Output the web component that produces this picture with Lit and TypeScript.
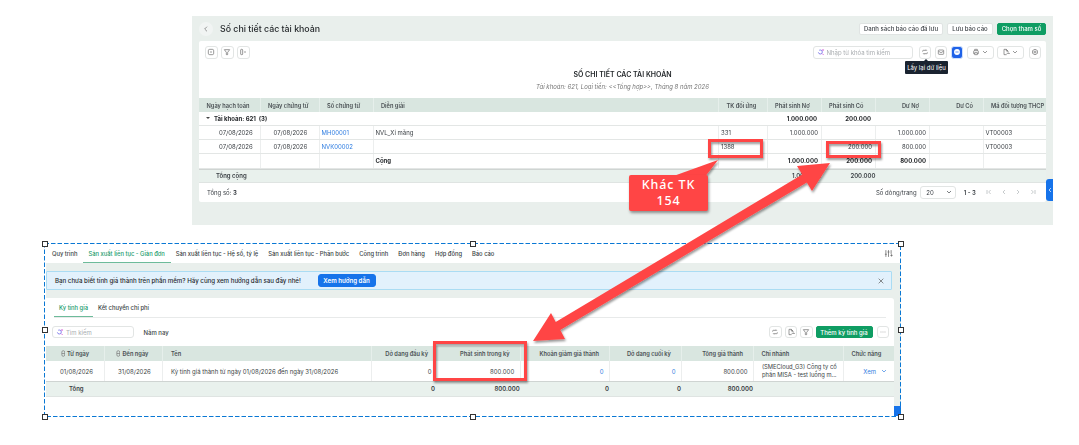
import {LitElement, html, css, svg} from 'lit';
import {customElement} from 'lit/decorators.js';

const line = (d: unknown) => html`<svg class="ico" viewBox="0 0 12 12" fill="none" stroke="currentColor" stroke-width="1">${d}</svg>`;

const icons = {
  collapse: line(svg`<rect x="2" y="2" width="8" height="8" rx="2"/><path d="M4.5 6h3"/>`),
  filter: line(svg`<path d="M2 2.5h8L7 6.5V10H5V6.5z"/>`),
  columns: line(svg`<rect x="2.5" y="2" width="3" height="8" rx="1"/><path d="M7.5 6h3"/>`),
  refresh: line(svg`<path d="M2.5 5.5V4.5a1 1 0 0 1 1-1h5l-1-1M9.5 6.5v1a1 1 0 0 1-1 1h-5l1 1"/>`),
  mail: line(svg`<rect x="2" y="3" width="8" height="6.5" rx="1"/><path d="M2.5 5l3.5 2 3.5-2"/>`),
  printer: line(svg`<path d="M4 4V2h4v2M4 8.5H2.5V5a1 1 0 0 1 1-1h5a1 1 0 0 1 1 1v3.5H8M4 7h4v3H4z"/>`),
  exportFile: line(svg`<path d="M7 10H3V2h3.5L9 4.5V6M6.5 2v2.5H9M7 8h4M10 7l1 1-1 1"/>`),
  gear: line(svg`<circle cx="6" cy="6" r="1.5"/><path d="M6 1.8l3.6 2.1v4.2L6 10.2 2.4 8.1V3.9z"/>`),
  chevron: line(svg`<path d="M3 4.5l3 3 3-3"/>`),
  back: line(svg`<path d="M7.5 2.5L4 6l3.5 3.5"/>`),
  close: line(svg`<path d="M2.5 2.5l7 7M9.5 2.5l-7 7"/>`),
  tune: line(svg`<path d="M2.5 1.5v9M6 1.5v9M9.5 1.5v5M1.2 7h2.6M4.7 4h2.6M8.5 8.5h3M10 7v3"/>`),
  more: line(svg`<path d="M2.5 6h1M5.5 6h1M8.5 6h1"/>`),
  first: line(svg`<path d="M3 3v6M8.5 3L5.5 6l3 3"/>`),
  prev: line(svg`<path d="M7.5 3l-3 3 3 3"/>`),
  next: line(svg`<path d="M4.5 3l3 3-3 3"/>`),
  last: line(svg`<path d="M9 3v6M3.5 3l3 3-3 3"/>`),
  sort: html`<svg class="ico sort" viewBox="0 0 8 12" fill="none" stroke="currentColor" stroke-width="1.2"><rect x="1.5" y="1" width="5" height="10" rx="2.5"/><path d="M1.5 6h5"/></svg>`,
  spark: html`<svg class="ico" viewBox="0 0 12 12" fill="none" stroke-width="1.2"><circle cx="5" cy="6" r="3" stroke="#6d6ae8" stroke-dasharray="8 3"/><path d="M8 8.5l2 2" stroke="#d24fd0"/><path d="M9 1.5v3M7.6 3h3" stroke="#d24fd0" stroke-width=".8"/></svg>`,
  messenger: html`<svg class="ico" viewBox="0 0 12 12"><circle cx="6" cy="6" r="4.4" fill="#fff"/><path d="M3.6 6h4.8" stroke="#1f62e8" stroke-width="1"/></svg>`,
};

const topHead = ['Ngày hạch toán', 'Ngày chứng từ', 'Số chứng từ', 'Diễn giải', 'TK đối ứng', 'Phát sinh Nợ', 'Phát sinh Có', 'Dư Nợ', 'Dư Có', 'Mã đối tượng THCP'];
const topRows = [
  ['07/08/2026', '07/08/2026', 'MH00001', 'NVL_Xi măng', '331', '1.000.000', '', '1.000.000', '', 'VT00003'],
  ['07/08/2026', '07/08/2026', 'NVK00002', '', '1388', '', '200.000', '800.000', '', 'VT00003'],
  ['', '', '', 'Cộng', '', '1.000.000', '200.000', '800.000', '', ''],
];

const subTabs = ['Quy trình', 'Sản xuất liên tục - Giản đơn', 'Sản xuất liên tục - Hệ số, tỷ lệ', 'Sản xuất liên tục - Phân bước', 'Công trình', 'Đơn hàng', 'Hợp đồng', 'Báo cáo'];
const botHead = ['Từ ngày', 'Đến ngày', 'Tên', 'Dở dang đầu kỳ', 'Phát sinh trong kỳ', 'Khoản giảm giá thành', 'Dở dang cuối kỳ', 'Tổng giá thành', 'Chi nhánh', 'Chức năng'];
const handles = ['tl', 'tc', 'tr-h', 'ml', 'mr', 'bl', 'bc', 'br'];

@customElement('app-root')
export class AppRoot extends LitElement {
  static styles = css`
    :host {
      display: block;
      position: relative;
      width: 1079px;
      height: 445px;
      overflow: hidden;
      background: #fff;
      font-family: Inter, 'Noto Sans', sans-serif;
      font-size: 6px;
      color: #3a3f44;
    }
    .ico { width: 8px; height: 8px; display: block; flex: none; }
    .ico.sort { width: 4.5px; height: 7px; color: #777; }

    .report {
      margin: 16px 0 0 192px;
      width: 861px;
      height: 209px;
      background: #e9efec;
      padding: 0 7px;
      box-sizing: border-box;
      display: flex;
      flex-direction: column;
      position: relative;
      filter: blur(0.3px);
    }
    .report-head {
      height: 25px;
      display: flex;
      align-items: center;
    }
    .back {
      width: 14px;
      height: 14px;
      border-radius: 50%;
      background: #f1f4f3;
      display: flex;
      align-items: center;
      justify-content: center;
      color: #666;
      margin-right: 7px;
    }
    .title { font-size: 8.8px; font-weight: 500; color: #1f2326; }
    .head-actions { margin-left: auto; display: flex; gap: 4px; }
    .btn {
      height: 12px;
      border-radius: 2px;
      background: #fff;
      border: 1px solid #e0e4e3;
      box-sizing: border-box;
      display: flex;
      align-items: center;
      justify-content: center;
      font-weight: 500;
      white-space: nowrap;
    }
    .btn.saved { width: 84px; }
    .btn.save { width: 46px; }
    .btn.params { width: 49px; }
    .btn.add { width: 57px; }
    .btn.green { background: #0f9d63; border-color: #0f9d63; color: #fff; }
    .btn.blue { width: 58px; height: 13px; background: #1673ea; border-color: #1673ea; color: #fff; border-radius: 3px; font-weight: 600; }

    .report-card {
      background: #fff;
      border-radius: 2px;
      height: 161px;
      display: flex;
      flex-direction: column;
    }
    .tools {
      height: 18px;
      box-sizing: border-box;
      padding: 5px 5px 0 6px;
      display: flex;
      gap: 3.5px;
      align-items: flex-start;
    }
    .tool {
      width: 12.5px;
      height: 12.5px;
      border: 1px solid #e2e5e4;
      border-radius: 3px;
      box-sizing: border-box;
      display: flex;
      align-items: center;
      justify-content: center;
      color: #666;
      background: #fff;
    }
    .tool.wide { width: 27px; gap: 1px; }
    .tool.blue { background: #1f62e8; border-color: #cfe0fb; }
    .tool.last { margin-left: 1px; }
    .search {
      width: 100px;
      height: 12.5px;
      border: 1px solid #e2e5e4;
      border-radius: 3px;
      box-sizing: border-box;
      display: flex;
      align-items: center;
      gap: 2px;
      padding-left: 3px;
      color: #a9adb0;
    }
    .report-search { margin: 0 2.5px 0 auto; }
    .push { margin-left: auto; }
    .report-title {
      text-align: center;
      font-size: 7px;
      font-weight: 600;
      color: #1f2326;
      margin-top: 11px;
      line-height: 9px;
    }
    .report-sub {
      text-align: center;
      font-style: italic;
      color: #777;
      margin-top: 4px;
      line-height: 8px;
      margin-bottom: 7px;
    }

    .row { display: grid; }
    .report-card .row { grid-template-columns: 61.5px 59px 54px 345.5px 48.5px 54px 54px 54px 54px 62.5px; }
    .cell {
      display: flex;
      align-items: center;
      white-space: nowrap;
      box-sizing: border-box;
      min-width: 0;
    }
    .thead { background: #d9e6e0; height: 14px; font-weight: 600; font-size: 5.7px; color: #4a5054; }
    .thead .cell { border-right: 1px solid #e6efeb; padding-left: 7.5px; }
    .thead .cell:last-child { border-right: 0; }
    .thead .cell.end { justify-content: flex-end; padding: 0 9.5px 0 0; }
    .tr { height: 14.3px; border-bottom: 1px solid #e3e6e5; box-sizing: border-box; }
    .tr .cell { border-right: 1px solid #eceeee; padding: 0 2px; }
    .tr .cell:last-child { border-right: 0; }
    .tr .cell.end { justify-content: flex-end; padding-right: 2.5px; }
    .tr .cell.d1 { padding-left: 20px; }
    .tr .cell.d2 { padding-left: 13px; }
    .link { color: #2f7de1; }
    .bold { font-weight: 700; color: #26292c; }
    .group { height: 13.7px; border-bottom: 1px solid #e3e6e5; box-sizing: border-box; font-weight: 700; color: #26292c; }
    .group .cell.end { justify-content: flex-end; padding-right: 4.5px; }
    .group .label, .total .label { grid-column: span 5; }
    .group .label { padding-left: 7px; gap: 4px; }
    .caret { width: 0; height: 0; border: 2px solid transparent; border-top: 2.5px solid #444; border-bottom: 0; }
    .total { height: 14px; background: #e9f1ed; border-top: 1px solid #cfd4d2; border-bottom: 1px solid #dfe4e2; box-sizing: border-box; font-weight: 600; }
    .total .label { padding-left: 17px; }
    .total .cell.end { justify-content: flex-end; }
    .foot {
      flex: 1;
      display: flex;
      align-items: center;
      padding: 0 9px 0 8px;
    }
    .pager { margin-left: auto; display: flex; align-items: center; }
    .select {
      width: 35.5px;
      height: 12.5px;
      margin: 0 8px 0 3.7px;
      border: 1px solid #e2e5e4;
      border-radius: 3px;
      box-sizing: border-box;
      display: flex;
      align-items: center;
      justify-content: space-between;
      padding: 0 2px 0 5px;
    }
    .page-count { font-weight: 600; margin-right: 9px; }
    .nav { display: flex; gap: 6.7px; color: #aab0b3; }
    .side-tab {
      position: absolute;
      right: 0;
      top: 163px;
      width: 7px;
      height: 22px;
      background: #1673ea;
      border-radius: 3px 0 0 3px;
      color: #fff;
      display: flex;
      align-items: center;
      justify-content: center;
    }
    .tooltip {
      position: absolute;
      left: 905px;
      top: 61px;
      width: 43px;
      height: 13px;
      background: #1a2330;
      color: #fff;
      border-radius: 1px;
      display: flex;
      align-items: center;
      justify-content: center;
    }
    .tooltip::before {
      content: '';
      position: absolute;
      left: 19px;
      top: -2px;
      border: 2px solid transparent;
      border-top: 0;
      border-bottom-color: #1a2330;
    }

    .frame {
      position: relative;
      margin: 18px 0 0 44px;
      width: 857px;
      height: 174px;
      padding: 1px 0 1px 1.5px;
      box-sizing: border-box;
      display: flex;
      flex-direction: column;
    }
    .dash { position: absolute; left: 0; top: 0; width: 857px; height: 174px; }
    .handle {
      position: absolute;
      width: 4px;
      height: 4px;
      background: #fff;
      border: 1px solid #333;
    }
    .tl { left: -2.5px; top: -2.5px; } .tc { left: 426px; top: -2.5px; } .tr-h { right: -2.5px; top: -2.5px; }
    .ml { left: -2.5px; top: 84px; } .mr { right: -2.5px; top: 84px; }
    .bl { left: -2.5px; bottom: -2.5px; } .bc { left: 426px; bottom: -2.5px; } .br { right: -2.5px; bottom: -2.5px; }

    .tabs {
      height: 19px;
      flex: none;
      display: flex;
      align-items: center;
      padding: 0 8px 0 1.5px;
      font-weight: 500;
      font-size: 5.8px;
    }
    .tab {
      height: 19px;
      padding: 0 5px;
      display: flex;
      align-items: center;
      box-sizing: border-box;
      white-space: nowrap;
    }
    .tab.on { color: #1b9b6b; border-bottom: 1px solid #6dbb9a; padding: 0 6px; }
    .tab-tune { margin-left: auto; color: #666; }
    .tab-tune .ico { width: 9px; height: 9px; }
    .work {
      flex: 1;
      background: #e9efec;
      padding: 8px 7px 0 0.5px;
      display: flex;
      flex-direction: column;
      position: relative;
    }
    .banner {
      height: 19px;
      flex: none;
      margin-right: 2px;
      background: #e2f1fc;
      border: 1px solid #aadcf3;
      border-radius: 1px;
      box-sizing: border-box;
      display: flex;
      align-items: center;
      padding: 0 6px 0 8px;
      font-weight: 500;
      font-size: 6.15px;
      color: #26292c;
    }
    .banner-text { width: 262.5px; white-space: nowrap; }
    .banner-close { margin-left: auto; color: #555; }
    .card {
      flex: 1;
      margin-top: 8px;
      background: #fff;
      border-radius: 0 3px 0 0;
      display: flex;
      flex-direction: column;
    }
    .card-tabs {
      height: 19px;
      flex: none;
      margin: 0 8px 0 8px;
      border-bottom: 1px solid #e8eaea;
      display: flex;
      align-items: center;
      font-weight: 500;
      font-size: 5.8px;
    }
    .card-tab { height: 19px; padding: 0 5px; display: flex; align-items: center; box-sizing: border-box; }
    .card-tab.on { color: #1b9b6b; border-bottom: 1px solid #6dbb9a; }
    .card-tools {
      height: 28px;
      flex: none;
      display: flex;
      align-items: center;
      padding: 0 5px 0 6px;
      gap: 3px;
    }
    .small-search { width: 81.5px; margin-right: 7px; }
    .year { font-weight: 500; }
    .more { margin-left: 1px; }
    .card .row { grid-template-columns: 58.7px 58.8px 209px 62.5px 85.7px 89.3px 72px 72px 90px 49px; }
    .card .thead { height: 15px; }
    .card .thead .cell { padding-left: 7.5px; gap: 2px; }
    .card .thead .cell.end { padding: 0 6px 0 0; }
    .card .thead .cell.wide-end { padding-right: 10px; }
    .card .thead .cell.d1 { padding-left: 14.5px; }
    .card .thead .cell.d2 { padding-left: 11.3px; }
    .card .tr { height: 21px; border-bottom: 1px solid #cfd4d2; }
    .card .tr .cell { padding: 0 7.5px; }
    .card .tr .cell.end { justify-content: flex-end; padding-right: 5.5px; }
    .card .tr .cell.open { justify-content: flex-end; padding-right: 2.5px; }
    .card .tr .cell.d1 { padding-left: 14px; }
    .card .tr .cell.d2 { padding-left: 13.3px; }
    .card .tr .cell.branch { white-space: normal; line-height: 8px; font-size: 5.8px; padding: 0 0 0 8px; }
    .card .tr .cell.view { color: #2f7de1; justify-content: flex-end; gap: 4px; padding-right: 5px; }
    .card .total { height: 14.5px; border-top: 0; font-weight: 600; }
    .card .total .label { grid-column: span 3; padding-left: 23px; }
    .card .total .cell.end { padding-right: 1px; }
    .card .total .cell.flush { padding-right: 0; }
    .thumb { position: absolute; right: 0; bottom: 0; width: 7px; height: 10px; background: #1673ea; }

    .marks { position: absolute; left: 0; top: 0; width: 1079px; height: 445px; pointer-events: none; }
    .callout {
      position: absolute;
      left: 629px;
      top: 175px;
      width: 79px;
      height: 36px;
      background: #ff4545;
      border-radius: 2px;
      box-shadow: 1px 2px 3px rgba(0, 0, 0, 0.4);
      color: #fff;
      font-family: 'Noto Sans', sans-serif;
      font-size: 12.5px;
      font-weight: 500;
      letter-spacing: 0.9px;
      line-height: 16px;
      text-align: center;
      display: flex;
      align-items: center;
      justify-content: center;
    }
  `;

  renderReport() {
    return html`
      <section class="report">
        <header class="report-head">
          <div class="back">${icons.back}</div>
          <div class="title">Số chi tiết các tài khoản</div>
          <div class="head-actions">
            <div class="btn saved">Danh sách báo cáo đã lưu</div>
            <div class="btn save">Lưu báo cáo</div>
            <div class="btn params green">Chọn tham số</div>
          </div>
        </header>
        <div class="report-card">
          <div class="tools">
            <div class="tool">${icons.collapse}</div>
            <div class="tool">${icons.filter}</div>
            <div class="tool">${icons.columns}</div>
            <div class="search report-search">${icons.spark}<span>Nhập từ khóa tìm kiếm</span></div>
            <div class="tool">${icons.refresh}</div>
            <div class="tool">${icons.mail}</div>
            <div class="tool blue">${icons.messenger}</div>
            <div class="tool wide">${icons.printer}${icons.chevron}</div>
            <div class="tool wide">${icons.exportFile}${icons.chevron}</div>
            <div class="tool last">${icons.gear}</div>
          </div>
          <div class="report-title">SỐ CHI TIẾT CÁC TÀI KHOẢN</div>
          <div class="report-sub">Tài khoản: 621, Loại tiền: &lt;&lt;Tổng hợp&gt;&gt;, Tháng 8 năm 2026</div>
          <div class="row thead">
            ${topHead.map((h, i) => html`<div class="cell ${i === 7 || i === 8 ? 'end' : ''}">${h}</div>`)}
          </div>
          <div class="row group">
            <div class="cell label"><span class="caret"></span>Tài khoản: 621&nbsp;&nbsp;(3)</div>
            <div class="cell end">1.000.000</div>
            <div class="cell end">200.000</div>
          </div>
          ${topRows.map((r, ri) => html`
            <div class="row tr ${ri === 2 ? 'bold' : ''}">
              ${r.map((v, i) => {
                const cls = [i === 0 ? 'd1' : '', i === 1 ? 'd2' : '', i === 2 ? 'link' : '', i >= 5 && i <= 8 ? 'end' : ''].join(' ');
                return html`<div class="cell ${cls}">${v}</div>`;
              })}
            </div>`)}
          <div class="row total">
            <div class="cell label">Tổng cộng</div>
            <div class="cell end">1.000.000</div>
            <div class="cell end">200.000</div>
          </div>
          <div class="foot">
            <span>Tổng số: <b>3</b></span>
            <div class="pager">
              <span>Số dòng/trang</span>
              <div class="select"><span>20</span>${icons.chevron}</div>
              <span class="page-count">1 - 3</span>
              <div class="nav">${icons.first}${icons.prev}${icons.next}${icons.last}</div>
            </div>
          </div>
        </div>
        <div class="side-tab">${icons.prev}</div>
      </section>`;
  }

  renderCosting() {
    return html`
      <section class="frame">
        <nav class="tabs">
          ${subTabs.map((t, i) => html`<div class="tab ${i === 1 ? 'on' : ''}">${t}</div>`)}
          <div class="tab-tune">${icons.tune}</div>
        </nav>
        <div class="work">
          <div class="banner">
            <span class="banner-text">Bạn chưa biết tính giá thành trên phần mềm? Hãy cùng xem hướng dẫn sau đây nhé!</span>
            <div class="btn blue">Xem hướng dẫn</div>
            <div class="banner-close">${icons.close}</div>
          </div>
          <div class="card">
            <div class="card-tabs">
              <div class="card-tab on">Kỳ tính giá</div>
              <div class="card-tab">Kết chuyển chi phí</div>
            </div>
            <div class="card-tools">
              <div class="search small-search">${icons.spark}<span>Tìm kiếm</span></div>
              <span class="year">Năm nay</span>
              <div class="tool push">${icons.refresh}</div>
              <div class="tool">${icons.exportFile}</div>
              <div class="tool">${icons.filter}</div>
              <div class="btn add green">Thêm kỳ tính giá</div>
              <div class="tool more">${icons.more}</div>
            </div>
            <div class="row thead">
              ${botHead.map((h, i) => {
                const cls = [i === 0 ? 'd1' : '', i === 1 ? 'd2' : '', i >= 3 && i <= 7 ? 'end' : '', i >= 4 && i <= 7 ? 'wide-end' : ''].join(' ');
                return html`<div class="cell ${cls}">${i < 2 ? icons.sort : ''}${h}</div>`;
              })}
            </div>
            <div class="row tr">
              <div class="cell d1">01/08/2026</div>
              <div class="cell d2">31/08/2026</div>
              <div class="cell">Kỳ tính giá thành từ ngày 01/08/2026 đến ngày 31/08/2026</div>
              <div class="cell open">0</div>
              <div class="cell end">800.000</div>
              <div class="cell end link">0</div>
              <div class="cell end link">0</div>
              <div class="cell end">800.000</div>
              <div class="cell branch">(SMECloud_G3) Công ty cổ phần MISA - test luồng m...</div>
              <div class="cell view">Xem ${icons.chevron}</div>
            </div>
            <div class="row total">
              <div class="cell label">Tổng</div>
              <div class="cell end flush">0</div>
              <div class="cell end">800.000</div>
              <div class="cell end">0</div>
              <div class="cell end">0</div>
              <div class="cell end">800.000</div>
            </div>
          </div>
          <div class="thumb"></div>
        </div>
        <svg class="dash" viewBox="0 0 857 174" fill="none">
          <rect x=".5" y=".5" width="856" height="173" stroke="#0a78d4" stroke-dasharray="4.5 2"/>
        </svg>
        ${handles.map(h => html`<span class="handle ${h}"></span>`)}
      </section>`;
  }

  render() {
    return html`
      ${this.renderReport()}
      ${this.renderCosting()}
      <div class="tooltip">Lấy lại dữ liệu</div>
      <svg class="marks" viewBox="0 0 1079 445">
        <defs>
          <filter id="shade" x="-10%" y="-10%" width="120%" height="120%">
            <feDropShadow dx="1" dy="2" stdDeviation="1.2" flood-color="#000" flood-opacity=".4"/>
          </filter>
        </defs>
        <g filter="url(#shade)">
          <g fill="none" stroke="#ff4545" stroke-width="3">
            <rect x="709.5" y="140.5" width="52" height="16"/>
            <rect x="827.5" y="142.5" width="52" height="14"/>
            <rect x="434.5" y="342.5" width="91" height="37"/>
          </g>
          <path fill="#ff4545" d="M718 160L675 175.5H706z"/>
          <path fill="#ff4545" d="M830 163L812 191L806.8 182.4L560.3 329.9L565 339L533 341L551 313L555.7 322.1L802.2 174.6L797 166z"/>
        </g>
      </svg>
      <div class="callout"><span>Khác TK<br />154</span></div>
    `;
  }
}
